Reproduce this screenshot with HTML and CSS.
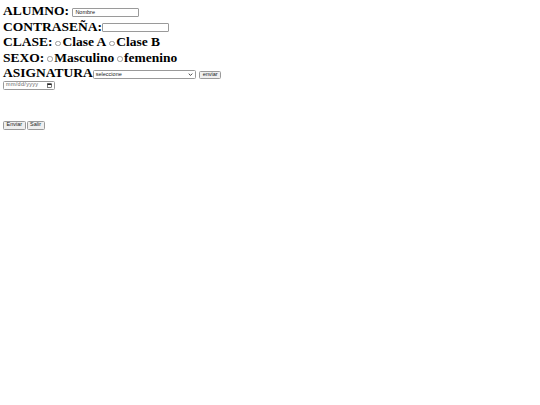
FILE: index.html
```html
<!DOCTYPE html>
<html lang="es">
<head>
<meta charset="utf-8">
<title>Formulario</title>
<link rel="stylesheet" href="styles.css">
</head>
<body>
<form class="form">
  <div class="row"><span class="lbl">ALUMNO:</span> <input class="txt" type="text" value="Nombre"></div>
  <div class="row"><span class="lbl">CONTRASEÑA:</span><input class="txt" type="password"></div>
  <div class="row"><span class="lbl">CLASE:</span> <span class="radio"></span><span class="lbl">Clase A</span> <span class="radio"></span><span class="lbl">Clase B</span></div>
  <div class="row"><span class="lbl">SEXO:</span> <span class="radio"></span><span class="lbl">Masculino</span> <span class="radio"></span><span class="lbl">femenino</span></div>
  <div class="row"><span class="lbl">ASIGNATURA</span><span class="select">seleccione<svg class="chev" viewBox="0 0 8 5" width="5" height="3"><path d="M1 1 L4 4 L7 1" fill="none" stroke="#222" stroke-width="1.4"/></svg></span> <span class="btn">enviar</span></div>
  <div class="daterow"><span class="date">mm/dd/yyyy<svg class="cal" viewBox="0 0 10 10" width="5" height="5"><rect x="1" y="1.5" width="8" height="7.5" fill="none" stroke="#222" stroke-width="1.2"/><rect x="1" y="1.5" width="8" height="2.5" fill="#222"/></svg></span></div>
  <div class="actions"><span class="btn">Enviar</span><span class="btn">Salir</span></div>
</form>
</body>
</html>
```
FILE: styles.css
```css
html, body { margin: 0; padding: 0; background: #fff; }
body { padding: 3px; font-family: "Liberation Serif", serif; }
.row { font-size: 13.5px; line-height: 15.5px; height: 15.5px; white-space: nowrap; display: block; }
.lbl { font-weight: bold; color: #000; }
.txt {
  width: 67px; height: 9px; box-sizing: border-box; padding: 0 2px;
  border: 1px solid #9a9a9a; border-radius: 1px;
  font-family: "Liberation Sans", sans-serif; font-size: 5.5px; color: #222;
  vertical-align: 1px; outline: none;
}
.radio {
  display: inline-block; width: 5.5px; height: 5.5px; box-sizing: border-box;
  border: 0.8px solid #999; border-radius: 50%; margin: 0 1.5px 0 -0.5px; vertical-align: 0;
}
.select {
  display: inline-flex; align-items: center; justify-content: space-between;
  width: 103px; height: 9px; box-sizing: border-box; padding: 0 2px;
  border: 1px solid #9a9a9a; border-radius: 1.5px; background: #fff;
  font-family: "Liberation Sans", sans-serif; font-size: 5.5px; line-height: 1; color: #222;
  vertical-align: 1px;
}
.btn {
  display: inline-flex; align-items: center; justify-content: center;
  height: 8.5px; box-sizing: border-box; padding: 0 2.5px;
  border: 1px solid #9a9a9a; border-radius: 1.5px; background: #efefef;
  font-family: "Liberation Sans", sans-serif; font-size: 5.5px; line-height: 1; color: #222;
  vertical-align: 1px;
}
.daterow { display: flex; height: 9.5px; }
.date {
  display: inline-flex; align-items: center; justify-content: space-between;
  width: 52px; height: 9px; box-sizing: border-box; padding: 0 2px;
  border: 1px solid #9a9a9a; border-radius: 1.5px;
  font-family: "Liberation Sans", sans-serif; font-size: 5.5px; letter-spacing: 0.3px; line-height: 1; color: #666;
}
.actions { margin-top: 30.5px; display: flex; gap: 1px; }
.actions .btn { height: 9px; padding: 0 2.5px; }
```
